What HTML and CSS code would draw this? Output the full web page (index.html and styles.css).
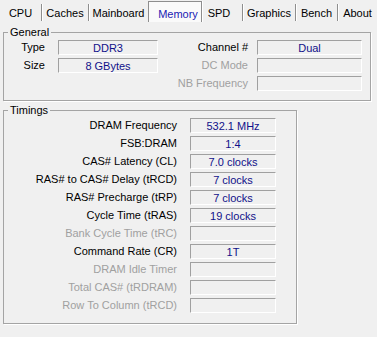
FILE: index.html
```html
<!DOCTYPE html>
<html lang="en">
  <head>
    <meta charset="UTF-8" />
    <title>CPU-Z Memory</title>
    <link rel="stylesheet" href="styles.css">
  </head>
  <body>
    <div class="tabs">
      <div class="tab tab-cpu">CPU</div>
      <div class="tab tab-caches">Caches</div>
      <div class="tab tab-main">Mainboard</div>
      <div class="tab tab-mem active">Memory</div>
      <div class="tab tab-spd">SPD</div>
      <div class="tab tab-gfx">Graphics</div>
      <div class="tab tab-bench">Bench</div>
      <div class="tab tab-about">About</div>
    </div>

    <fieldset class="group general">
      <legend>General</legend>
      <div class="gen-grid">
        <span class="lbl">Type</span>
        <span class="field">DDR3</span>
        <span class="lbl">Channel #</span>
        <span class="field">Dual</span>

        <span class="lbl">Size</span>
        <span class="field">8 GBytes</span>
        <span class="lbl off">DC Mode</span>
        <span class="field"></span>

        <span></span>
        <span></span>
        <span class="lbl off">NB Frequency</span>
        <span class="field"></span>
      </div>
    </fieldset>

    <fieldset class="group timings">
      <legend>Timings</legend>
      <div class="tim-grid">
        <span class="lbl">DRAM Frequency</span><span class="field">532.1 MHz</span>
        <span class="lbl">FSB:DRAM</span><span class="field">1:4</span>
        <span class="lbl">CAS# Latency (CL)</span><span class="field">7.0 clocks</span>
        <span class="lbl">RAS# to CAS# Delay (tRCD)</span><span class="field">7 clocks</span>
        <span class="lbl">RAS# Precharge (tRP)</span><span class="field">7 clocks</span>
        <span class="lbl">Cycle Time (tRAS)</span><span class="field">19 clocks</span>
        <span class="lbl off">Bank Cycle Time (tRC)</span><span class="field"></span>
        <span class="lbl">Command Rate (CR)</span><span class="field">1T</span>
        <span class="lbl off">DRAM Idle Timer</span><span class="field"></span>
        <span class="lbl off">Total CAS# (tRDRAM)</span><span class="field"></span>
        <span class="lbl off">Row To Column (tRCD)</span><span class="field"></span>
      </div>
    </fieldset>
  </body>
</html>
```

FILE: styles.css
```css
body{
  margin: 0;
  background-color: #f0f0f0;
  color: #000;
  font-family: "Liberation Sans", Arial, sans-serif;
  font-size: 11px;
  width: 377px;
  height: 337px;
  overflow: hidden;
}
.tabs{
  display: flex;
  height: 22px;
  align-items: flex-end;
}
.tab{
  height: 17px;
  line-height: 19px;
  text-align: center;
  border-right: 1px solid #8e8e8e;
  box-shadow: 1px 0 0 #fff;
  box-sizing: border-box;
  margin-bottom: 1px;
}
.tab-cpu{ width: 42px; }
.tab-caches{ width: 47px; }
.tab-main{ width: 59px; border-right: none; box-shadow: none; }
.tab-mem{ width: 54px; }
.tab-spd{ width: 41px; padding-right: 6px; }
.tab-gfx{ width: 53px; }
.tab-bench{ width: 42px; }
.tab-about{ width: 39px; border-right: none; box-shadow: none; }
.tab.active{
  height: 21px;
  line-height: 24px;
  margin-bottom: 0;
  background-color: #fafafa;
  color: #1a1ab4;
  border: 1px solid #8e8e8e;
  border-bottom: none;
  padding-left: 6px;
}

.group{
  border: 1px solid #a4a4a4;
  box-shadow: 1px 1px 0 #fff;
  margin: 0 0 0 3px;
  min-width: 0;
}
.group legend{
  padding: 0 2px;
  margin-left: 4px;
  line-height: 13px;
}
.general{
  margin-top: 4px;
  width: 368px;
  box-sizing: border-box;
  padding: 1px 0 9px 0;
}
.timings{
  margin-top: 3px;
  width: 294px;
  box-sizing: border-box;
  padding: 1px 0 10px 0;
}

.lbl{
  text-align: right;
  line-height: 15px;
  white-space: nowrap;
}
.lbl.off{
  color: #a0a0a0;
}
.field{
  height: 15px;
  line-height: 15px;
  text-align: center;
  color: #10108a;
  border-top: 1px solid #a0a0a0;
  border-left: 1px solid #a0a0a0;
  border-right: 1px solid #fff;
  border-bottom: 1px solid #fff;
  box-sizing: border-box;
}

.gen-grid{
  display: grid;
  grid-template-columns: 41px 100px 77px 101px;
  column-gap: 13px;
  row-gap: 3px;
}
.gen-grid .field:nth-child(4n){
  margin-left: -4px;
}
.tim-grid{
  display: grid;
  grid-template-columns: 173px 86px;
  column-gap: 13px;
  row-gap: 3px;
}
```
